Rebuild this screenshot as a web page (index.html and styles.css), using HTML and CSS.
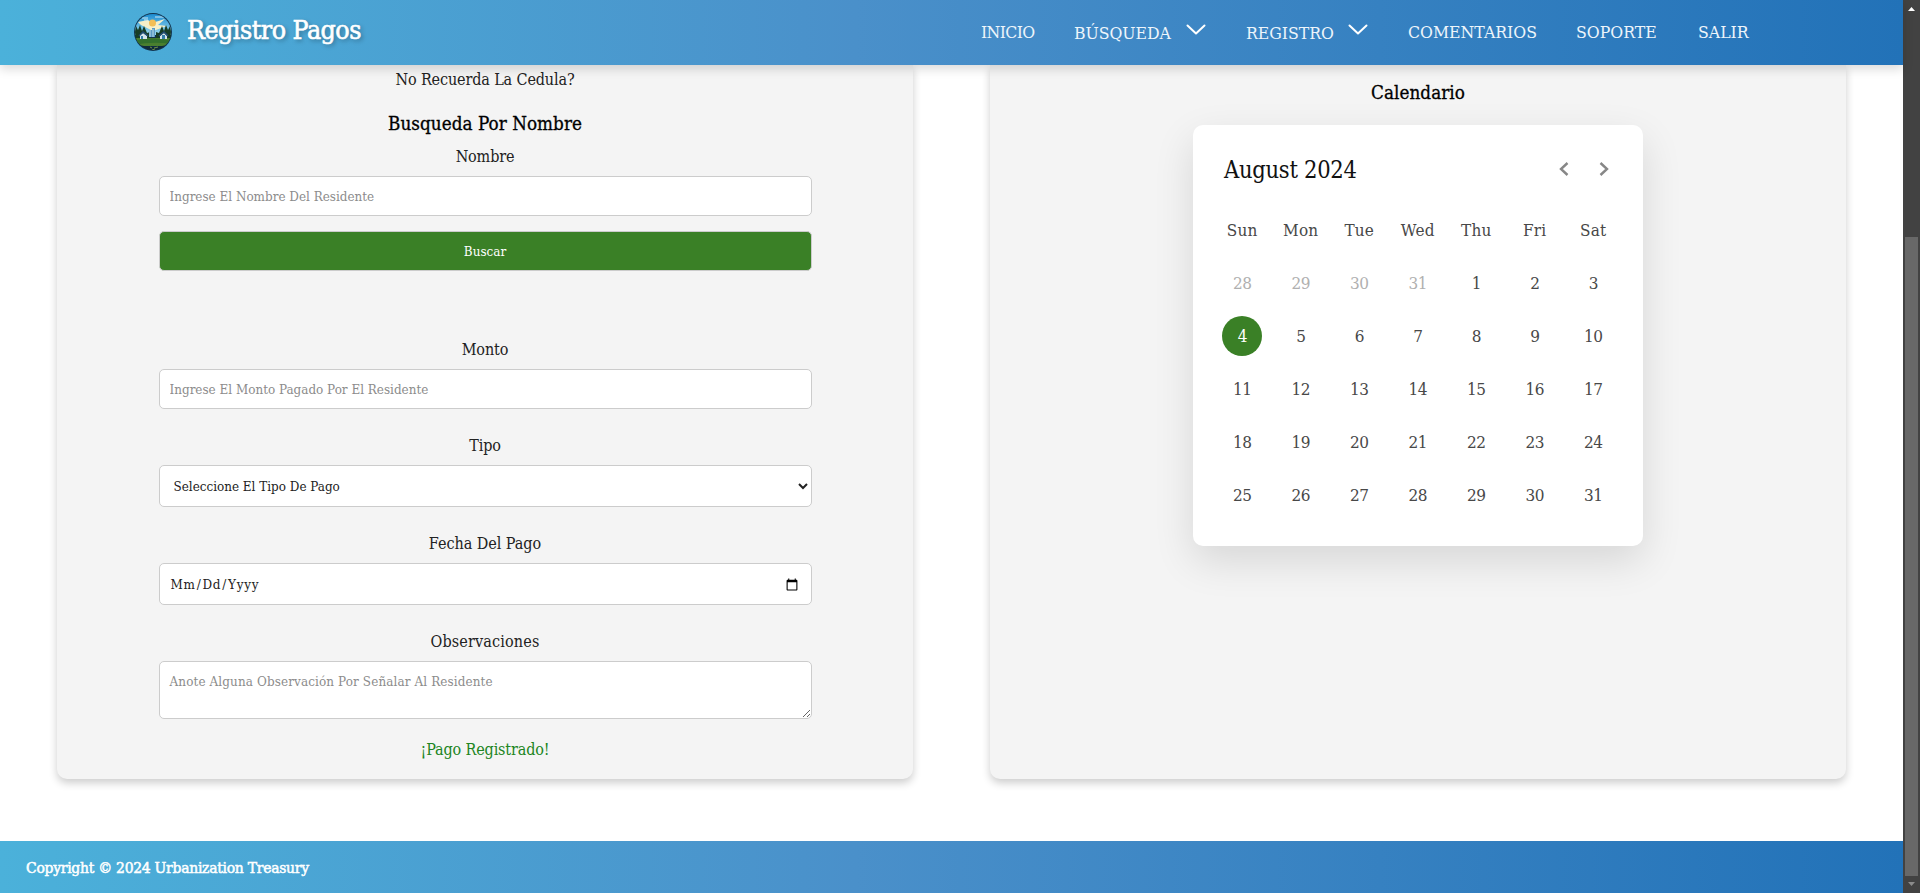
FILE: index.html
```html
<!DOCTYPE html>
<html lang="es">
<head>
<meta charset="utf-8">
<title>Registro Pagos</title>
<link rel="stylesheet" href="styles.css">
</head>
<body>
<div class="page">
  <header class="header">
    <div class="brand">
      <svg class="logo" viewBox="0 0 38 38">
        <defs>
          <clipPath id="disc"><circle cx="19" cy="19" r="18"/></clipPath>
          <linearGradient id="sky" x1="0" y1="0" x2="0" y2="1"><stop offset="0" stop-color="#1688cf"/><stop offset="1" stop-color="#9edcf0"/></linearGradient>
        </defs>
        <circle cx="19" cy="19" r="19" fill="#12344f"/>
        <g clip-path="url(#disc)">
          <rect width="38" height="22" fill="url(#sky)"/>
          <path d="M4 9l10-2 4 3 13-4-7 6 9 1-14 5L7 12z" fill="#f7efc9"/>
          <path d="M8 5h6M21 4h9M10 7h4" stroke="#cceaf5"/>
          <circle cx="18.500" cy="10" r="3.500" fill="#f4be55"/>
          <path d="M0 22l2-9 2 4 2-5 2 6 2-5 3 7 3-1v12H0zM38 22l-2-9-2 4-2-5-2 6-2-5-3 7-3-1v12h16z" fill="#173d27"/>
          <path d="M15 17h3v-2h3v9h-6z" fill="#5c9bc4"/>
          <path d="M16 17v7M19 16v8" stroke="#b9dce9"/>
          <rect y="25" width="38" height="8" fill="#4a7f2f"/>
          <path d="M0 28q16-5 38 0v3q-20-3-38 1z" fill="#33702c"/>
          <path d="M6 26v-4l3-2 4 3v3zM26 26v-3l4-3 3 3v3z" fill="#d3e3ea"/>
          <path d="M5 23l4-4 5 4M25 23l5-4 4 4" fill="none" stroke="#234e78" stroke-width="1.500"/>
          <path d="M7 23h2v3H7zM28 22h3v4h-3z" fill="#347eaa"/>
          <path d="M0 31q19 5 38 0v7H0z" fill="#102b3a"/>
          <path d="M16 34l2 1M20 35l4-1M18 37l3-1" stroke="#719347"/>
        </g>
      </svg>
      <span class="title">Registro Pagos</span>
    </div>
    <nav class="nav">
      <a class="inicio">INICIO</a>
      <a class="busqueda drop">BÚSQUEDA</a>
      <svg class="chevron" viewBox="0 0 20 12"><path d="M1.500 1.500L10 9.500l8.500-8"/></svg>
      <a class="registro drop">REGISTRO</a>
      <svg class="chevron" viewBox="0 0 20 12"><path d="M1.500 1.500L10 9.500l8.500-8"/></svg>
      <a class="comentarios">COMENTARIOS</a>
      <a class="soporte">SOPORTE</a>
      <a class="salir">SALIR</a>
    </nav>
  </header>
  <main class="main">
    <section class="card form">
      <p class="label hint">No Recuerda La Cedula?</p>
      <h3 class="heading">Busqueda Por Nombre</h3>
      <label class="label l-nombre">Nombre</label>
      <input class="field f-nombre" placeholder="Ingrese El Nombre Del Residente">
      <button class="field button"><span>Buscar</span></button>
      <label class="label l-monto">Monto</label>
      <input class="field f-monto" placeholder="Ingrese El Monto Pagado Por El Residente">
      <label class="label l-tipo">Tipo</label>
      <select class="field f-tipo"><option>Seleccione El Tipo De Pago</option></select>
      <label class="label l-fecha">Fecha Del Pago</label>
      <input class="field f-fecha" type="date">
      <label class="label l-obs">Observaciones</label>
      <textarea class="field f-obs" placeholder="Anote Alguna Observación Por Señalar Al Residente"></textarea>
      <p class="label done">¡Pago Registrado!</p>
    </section>
    <section class="card agenda">
      <h3 class="heading cal-heading">Calendario</h3>
      <div class="calendar">
        <div class="cal-top">
          <span class="month">August 2024</span>
          <div class="arrows">
            <svg viewBox="0 0 10 14"><path d="M8.500 1L2 7l6.500 6"/></svg>
            <svg viewBox="0 0 10 14"><path d="M1.500 1L8 7l-6.500 6"/></svg>
          </div>
        </div>
        <div class="grid days">
          <span>Sun</span><span>Mon</span><span>Tue</span><span>Wed</span><span>Thu</span><span>Fri</span><span>Sat</span>
        </div>
        <div class="grid dates">
          <span class="out">28</span><span class="out">29</span><span class="out">30</span><span class="out">31</span><span>1</span><span>2</span><span>3</span>
          <span class="today">4</span><span>5</span><span>6</span><span>7</span><span>8</span><span>9</span><span>10</span>
          <span>11</span><span>12</span><span>13</span><span>14</span><span>15</span><span>16</span><span>17</span>
          <span>18</span><span>19</span><span>20</span><span>21</span><span>22</span><span>23</span><span>24</span>
          <span>25</span><span>26</span><span>27</span><span>28</span><span>29</span><span>30</span><span>31</span>
        </div>
      </div>
    </section>
  </main>
  <footer class="footer"><span>Copyright © 2024 Urbanization Treasury</span></footer>
</div>
<aside class="scrollbar">
  <svg viewBox="0 0 7 4"><path d="M0 4L3.500 0 7 4z" fill="#fff"/></svg>
  <div class="thumb"></div>
  <svg viewBox="0 0 7 4"><path d="M0 0h7L3.500 4z" fill="#8b8b8b"/></svg>
</aside>
</body>
</html>
```
FILE: styles.css
```css
* { box-sizing: border-box; }
body {
  margin: 0;
  height: 893px;
  display: flex;
  overflow: hidden;
  background: #fff;
  font-family: "Roboto Slab", "DejaVu Serif Condensed", "DejaVu Serif", serif;
  font-stretch: condensed;
  font-weight: 300;
}
h3, p { margin: 0; }
.page { width: 1903px; height: 893px; display: flex; flex-direction: column; }

.header {
  position: relative;
  z-index: 2;
  height: 65px;
  flex: none;
  display: flex;
  justify-content: space-between;
  padding: 0 154px 0 134px;
  background: linear-gradient(to right, #4bb1da, #4a90ca 45%, #2272b8);
  box-shadow: 0 4px 10px rgba(0, 0, 0, .15);
  color: #fff;
}
.brand { display: flex; align-items: flex-start; gap: 15px; }
.logo { width: 38px; height: 38px; margin-top: 13px; }
.title {
  font-size: 26.500px;
  line-height: 34px;
  margin-top: 13px;
  width: 174px;
  letter-spacing: -.5px;
  -webkit-text-stroke: .6px #fff;
  text-shadow: 2px 2px 4px rgba(0, 0, 0, .35);
  white-space: nowrap;
}
.nav { display: flex; align-items: flex-start; font-size: 17.500px; line-height: 24px; color: #edf5fb; }
.nav a { margin-top: 20px; white-space: nowrap; letter-spacing: 0; }
.nav .drop { margin-top: 21px; letter-spacing: -.05px; }
.nav .inicio { width: 93px; letter-spacing: -.65px; }
.busqueda { width: 112px; }
.registro { width: 102px; }
.comentarios { width: 168px; }
.soporte { width: 122px; }
.salir { width: 51px; }
.chevron { width: 20px; height: 12px; margin: 24px 40px 0 0; fill: none; stroke: #fff; stroke-width: 2; stroke-linecap: round; stroke-linejoin: round; }

.main { flex: 1; display: flex; gap: 77px; padding: 0 57px 62px; min-height: 0; }
.card {
  flex: 1;
  display: flex;
  flex-direction: column;
  align-items: center;
  background: #f4f4f4;
  border-radius: 0 0 10px 10px;
  box-shadow: 0 4px 8px rgba(0, 0, 0, .2);
}
.label { font-size: 16px; line-height: 20px; letter-spacing: -.13px; color: #222; white-space: nowrap; }
.heading { font-size: 18.700px; line-height: 24px; font-weight: 300; letter-spacing: .05px; -webkit-text-stroke: .3px #000; color: #000; white-space: nowrap; }
.field {
  width: 653px;
  height: 40px;
  flex: none;
  margin: 0;
  padding: 10px;
  border: 1px solid #ccc;
  border-radius: 5px;
  background: #fff;
  font-family: inherit;
  font-stretch: inherit;
  font-weight: 300;
  font-size: 13.333px;
  letter-spacing: 0;
  text-transform: capitalize;
  color: #222;
  outline: none;
}
.field::placeholder { color: #8c8c8c; }
.hint { margin-top: 5px; }
.form .heading { margin-top: 22px; }
.l-nombre { margin-top: 11px; }
.f-nombre { margin-top: 9px; }
.button { margin-top: 15px; background: #3a8026; color: #fff; text-align: center; }
.l-monto { margin-top: 69px; }
.f-monto { margin-top: 9px; }
.l-tipo { margin-top: 27px; }
.f-tipo { margin-top: 9px; height: 42px; }
.l-fecha { margin-top: 27px; letter-spacing: -.03px; }
.f-fecha { margin-top: 9px; height: 42px; padding-top: 11px; padding-bottom: 9px; letter-spacing: .75px; }
.l-obs { margin-top: 27px; letter-spacing: .15px; }
.f-obs { margin-top: 9px; height: 58px; padding-top: 12px; letter-spacing: .12px; }
.done { margin-top: 21px; color: #208522; }

.cal-heading { margin-top: 16px; }
.calendar {
  width: 450px;
  height: 421px;
  margin-top: 20px;
  padding: 25px 20px 20px;
  background: #fff;
  border-radius: 10px;
  box-shadow: 0 15px 40px rgba(0, 0, 0, .12);
}
.cal-top { display: flex; justify-content: space-between; padding: 0 14px 0 11px; height: 40px; align-items: center; }
.month { font-size: 23.500px; letter-spacing: -.3px; color: #111; }
.arrows { display: flex; gap: 30px; margin-top: -2px; }
.arrows svg { width: 10px; height: 14px; fill: none; stroke: #878787; stroke-width: 2.400; }
.grid { display: grid; grid-template-columns: repeat(7, 58.500px); font-size: 17px; letter-spacing: .2px; color: #484848; justify-items: center; }
.days { margin-top: 30px; line-height: 20px; }
.dates { margin-top: 16px; grid-auto-rows: 53px; align-items: center; letter-spacing: -.5px; }
.grid .out { color: #b0b0b0; }
.grid .today { width: 40px; height: 40px; border-radius: 50%; background: #3a8026; color: #fff; line-height: 40px; text-align: center; }

.footer {
  height: 52px;
  flex: none;
  padding: 1px 0 0 26px;
  display: flex;
  align-items: center;
  background: linear-gradient(to right, #4bb1da, #4a90ca 45%, #2272b8);
  color: #fff;
  font-size: 15.500px;
  letter-spacing: -.27px;
  -webkit-text-stroke: .5px #fff;
}

.scrollbar { width: 17px; height: 893px; display: flex; flex-direction: column; align-items: center; background: #424242; padding: 7px 0; }
.scrollbar svg { width: 7px; height: 4px; flex: none; }
.thumb { width: 13px; height: 639px; margin: 226px 0 6px; background: #686868; }
```
